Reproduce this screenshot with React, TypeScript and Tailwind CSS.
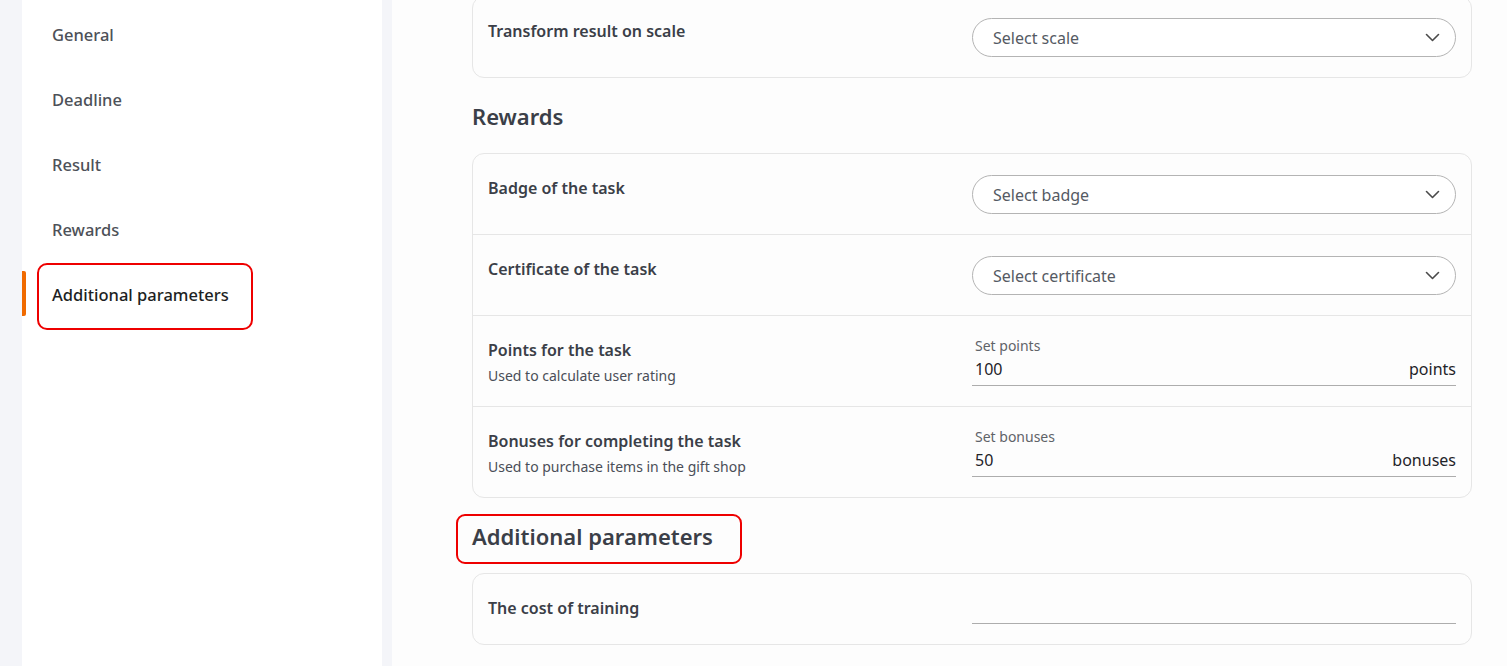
const font = { fontFamily: '"Noto Sans", "Open Sans", Arial, sans-serif' };

const navItems = ["General", "Deadline", "Result", "Rewards", "Additional parameters"];

function Chevron() {
  return (
    <svg width="15" height="9" viewBox="0 0 15 9" fill="none" className="text-[#4a4a4a]">
      <path d="M1.5 1.5L7.5 7.5L13.5 1.5" stroke="currentColor" strokeWidth="1.6" strokeLinecap="round" strokeLinejoin="round" />
    </svg>
  );
}

function Select({ placeholder }: { placeholder: string }) {
  return (
    <div className="flex h-[39px] items-center justify-between rounded-full border border-[#b4b4b4] bg-white pl-5 pr-[15px] text-[16px] text-[#555a63]">
      <span>{placeholder}</span>
      <Chevron />
    </div>
  );
}

function NumberField({ label, value, unit }: { label: string; value: string; unit: string }) {
  return (
    <div className="flex flex-col">
      <span className="pl-[3px] text-[14px] leading-[18px] text-[#5f6368]">{label}</span>
      <div className="flex items-end justify-between border-b border-[#adadad] pb-[2px] text-[16px] leading-[28px] text-[#1f2329]">
        <span className="pl-[3px]">{value}</span>
        <span>{unit}</span>
      </div>
    </div>
  );
}

function Row({
  title,
  hint,
  children,
  height,
  divider = true,
  fieldTop = "pt-[21px]",
}: {
  title: string;
  hint?: string;
  children?: React.ReactNode;
  height: string;
  divider?: boolean;
  fieldTop?: string;
}) {
  return (
    <div className={`grid grid-cols-[484px_1fr] px-[15px] ${height} ${divider ? "border-b border-[#e6e6e6]" : ""}`}>
      <div className="pt-[22px]">
        <div className="text-[16px] font-semibold leading-[24px] text-[#3b3f48]">{title}</div>
        {hint ? <div className="mt-[4px] text-[14px] leading-[20px] text-[#4a4e57]">{hint}</div> : null}
      </div>
      <div className={fieldTop}>{children}</div>
    </div>
  );
}

function SectionTitle({ title, marked }: { title: string; marked?: boolean }) {
  return (
    <div className="pt-[23px] pb-[22px]">
      <div className="relative inline-block text-[22px] font-semibold leading-[30px] text-[#3b3f48]">
        {title}
        {marked ? (
          <div className="absolute -left-4 -top-[7px] h-[50px] w-[286px] rounded-[9px] border-2 border-[#ee0000]" />
        ) : null}
      </div>
    </div>
  );
}

export default function App() {
  return (
    <div style={font} className="flex h-[666px] w-full overflow-hidden bg-[#f4f5f9]">
      <aside className="ml-[22px] w-[360px] shrink-0 bg-white pt-[3px]">
        {navItems.map((item, i) => {
          const active = i === navItems.length - 1;
          return (
            <div key={item} className="relative flex h-[65px] items-center pl-[30px]">
              {active ? (
                <>
                  <div className="absolute left-0 top-[8px] h-[45px] w-[4px] rounded-r-[2px] bg-[#f06a00]" />
                  <div className="absolute left-[15px] top-0 h-[67px] w-[216px] rounded-[10px] border-2 border-[#ee0000]" />
                </>
              ) : null}
              <span className={`relative text-[16.5px] font-medium ${active ? "text-[#1d1f23]" : "text-[#4d5158]"}`}>
                {item}
              </span>
            </div>
          );
        })}
      </aside>
      <main className="ml-[10px] flex-1 bg-[#fdfdfd] pl-[80px] pr-[35px]">
        <div className="-mt-[4px]">
          <div className="rounded-[12px] border border-[#e6e6e6] bg-[#fdfdfd]">
            <Row title="Transform result on scale" height="h-[80px]" divider={false}>
              <Select placeholder="Select scale" />
            </Row>
          </div>

          <SectionTitle title="Rewards" />

          <div className="rounded-[12px] border border-[#e6e6e6] bg-[#fdfdfd]">
            <Row title="Badge of the task" height="h-[81px]">
              <Select placeholder="Select badge" />
            </Row>
            <Row title="Certificate of the task" height="h-[81px]">
              <Select placeholder="Select certificate" />
            </Row>
            <Row title="Points for the task" hint="Used to calculate user rating" height="h-[91px]" fieldTop="pt-[21px]">
              <NumberField label="Set points" value="100" unit="points" />
            </Row>
            <Row
              title="Bonuses for completing the task"
              hint="Used to purchase items in the gift shop"
              height="h-[90px]"
              divider={false}
              fieldTop="pt-[21px]"
            >
              <NumberField label="Set bonuses" value="50" unit="bonuses" />
            </Row>
          </div>

          <SectionTitle title="Additional parameters" marked />

          <div className="rounded-[12px] border border-[#e6e6e6] bg-[#fdfdfd]">
            <div className="grid h-[70px] grid-cols-[484px_1fr] px-[15px]">
              <div className="pt-[22px] text-[16px] font-semibold leading-[24px] text-[#3b3f48]">The cost of training</div>
              <div className="pt-[24px]">
                <div className="h-[26px] border-b border-[#adadad]" />
              </div>
            </div>
          </div>
        </div>
      </main>
    </div>
  );
}
